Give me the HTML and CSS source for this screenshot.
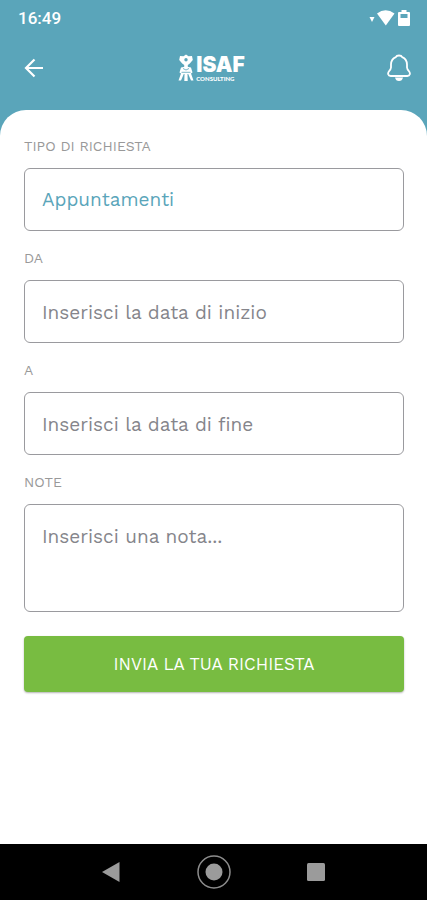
FILE: index.html
```html
<!DOCTYPE html>
<html lang="it">
<head>
<meta charset="utf-8">
<meta name="viewport" content="width=device-width, initial-scale=1">
<title>Richiesta</title>
<link rel="stylesheet" href="styles.css">
</head>
<body>
<div class="status">
  <span class="time">16:49</span>
  <svg class="status-icons" width="42" height="18" viewBox="0 0 42 18" fill="#fff" aria-hidden="true">
    <path d="M0.5 8h5L3 13z"/>
    <path d="M8 4.500Q16.500-2 25.500 4.500L16.800 16.500z"/>
    <path d="M30 3h2.500V1h5v2H40q1 0 1 1V16q0 1-1 1H30q-1 0-1-1V4q0-1 1-1z"/>
    <path d="M31.500 5h7v4h-7z" fill="#5aa5ba"/>
  </svg>
</div>
<header class="bar">
  <button class="icon-button" type="button" aria-label="Indietro">
    <svg width="20" height="20" viewBox="0 0 20 20" fill="none" stroke="#fff" stroke-width="2.200"><path d="M19 10H2M10.500 1.500L2 10l8.500 8.500"/></svg>
  </button>
  <div class="brand">
    <svg width="16" height="28" viewBox="0 0 16 28" fill="#fff" aria-hidden="true">
      <path d="M2 2l3.500.3L8 .5l2.500 1.800 3.500-.3.800 4-3 3.500L9.800 11v2H6.200v-2l-2-1.500L1.200 6z"/>
      <circle cx="8" cy="5.800" r="1.700" fill="#5aa5ba"/>
      <path d="M3 13.500l5-1 5 1 1.500 5-1.500 1 2.500 7h-2.500L10.200 20H9.500l.2 7H6.300l.2-7h-.7L3 26.500H.5l2.500-7-1.500-1z"/>
      <path d="M3.500 18.300h9M5 14.500l3 1.500 3-1.500" fill="none" stroke="#5aa5ba" stroke-width=".8"/>
    </svg>
    <div class="brand-text"><span class="brand-name">ISAF</span><span class="brand-sub">CONSULTING</span></div>
  </div>
  <button class="icon-button" type="button" aria-label="Notifiche">
    <svg width="24" height="28" viewBox="0 0 24 28" fill="none" stroke="#fff" stroke-width="1.800" stroke-linejoin="round">
      <path d="M8.800 3.200Q9.500 1.500 12 1.500t3.200 1.700Q19.800 5 20 10.500v3q.2 2 1.800 3.500 1.400 1.500 1 3.200-.5 1.800-2.500 1.800H3.700q-2 0-2.500-1.800-.4-1.700 1-3.200 1.600-1.500 1.800-3.500v-3Q4.200 5 8.800 3.200z"/>
      <path d="M8 23.500q.8 3.500 4 3.500t4-3.500z" fill="#fff" stroke="none"/>
    </svg>
  </button>
</header>
<main class="sheet">
  <form class="form">
    <div class="field">
      <label for="tipo">TIPO DI RICHIESTA</label>
      <select id="tipo" class="control chosen"><option>Appuntamenti</option></select>
    </div>
    <div class="field">
      <label for="da">DA</label>
      <input id="da" class="control" type="text" placeholder="Inserisci la data di inizio">
    </div>
    <div class="field">
      <label for="a">A</label>
      <input id="a" class="control" type="text" placeholder="Inserisci la data di fine">
    </div>
    <div class="field">
      <label for="note">NOTE</label>
      <textarea id="note" class="control note" placeholder="Inserisci una nota..."></textarea>
    </div>
    <button class="submit" type="button">INVIA LA TUA RICHIESTA</button>
  </form>
</main>
<nav class="system">
  <button class="icon-button" type="button" aria-label="Indietro (sistema)">
    <svg width="18" height="22" viewBox="0 0 18 22" fill="#9b9b9b"><path d="M0 11L17.500 1v20z"/></svg>
  </button>
  <button class="icon-button" type="button" aria-label="Home">
    <svg width="34" height="34" viewBox="0 0 34 34" fill="#9b9b9b"><circle cx="17" cy="17" r="8.500"/><circle cx="17" cy="17" r="16" fill="none" stroke="#8d8d8d" stroke-width="1.500"/></svg>
  </button>
  <button class="icon-button" type="button" aria-label="App recenti">
    <svg width="18" height="18" viewBox="0 0 18 18" fill="#9b9b9b"><rect width="18" height="18" rx="1.500"/></svg>
  </button>
</nav>
</body>
</html>
```
FILE: styles.css
```css
* {
  box-sizing: border-box;
}

body {
  margin: 0;
  min-height: 100vh;
  display: flex;
  flex-direction: column;
  background: #5aa5ba;
  font-family: "Work Sans", Inter, sans-serif;
}

button {
  border: 0;
  font-family: inherit;
}

.status {
  display: flex;
  justify-content: space-between;
  align-items: center;
  height: 36px;
  padding: 0 16px 0 18px;
}

.time {
  color: #fff;
  font: 500 17px/20px Roboto, sans-serif;
}

.bar {
  display: flex;
  justify-content: space-between;
  align-items: center;
  height: 74px;
  padding: 0 16px 11px 24px;
}

.icon-button {
  display: flex;
  padding: 0;
  background: none;
}

.brand {
  display: flex;
  align-items: center;
  gap: 2px;
  padding-right: 8px;
  color: #fff;
}

.brand-text {
  display: flex;
  flex-direction: column;
}

.brand-name {
  font: 900 21px/22px Inter, sans-serif;
}

.brand-sub {
  font: 900 6px/6px Lato, sans-serif;
}

.sheet {
  flex: 1;
  padding: 27px 23px 24px 24px;
  border-radius: 26px 26px 0 0;
  background: #fff;
}

.form {
  display: flex;
  flex-direction: column;
  gap: 18px;
}

.field {
  display: flex;
  flex-direction: column;
  gap: 12px;
}

.field label {
  color: #999;
  font-size: 14px;
  line-height: 19px;
}

.control {
  display: block;
  width: 100%;
  height: 63px;
  margin: 0;
  padding: 1px 17px 0;
  border: 1px solid #9a9a9e;
  border-radius: 6px;
  background: #fff;
  color: #85858b;
  font: 400 19px/24px "Work Sans", Inter, sans-serif;
  appearance: none;
}

.control::placeholder {
  color: #85858b;
  opacity: 1;
}

.chosen {
  color: #5aa5ba;
}

.note {
  height: 108px;
  padding: 20px 17px;
  resize: none;
}

.submit {
  height: 56px;
  margin-top: 6px;
  border-radius: 4px;
  background: #78bc41;
  box-shadow: 0 1px 2px rgba(0, 0, 0, 0.3);
  color: #fff;
  font-size: 17px;
}

.system {
  display: flex;
  justify-content: space-between;
  align-items: center;
  height: 56px;
  padding: 0 24%;
  background: #000;
}
```
